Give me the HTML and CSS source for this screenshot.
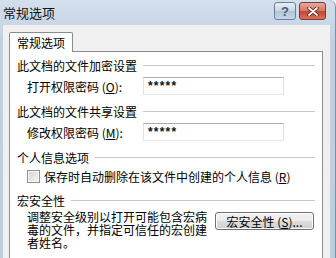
FILE: index.html
```html
<!DOCTYPE html>
<html lang="zh-CN">
<head>
  <meta charset="UTF-8">
  <title>常规选项</title>
  <link rel="stylesheet" href="styles.css">
</head>
<body>
  <div class="window">
    <div class="titlebar">
      <span class="title">常规选项</span>
      <div class="caption-buttons">
        <div class="cap-btn help">?</div>
        <div class="cap-btn close">
          <svg width="12" height="9" viewBox="0 0 12 9">
            <path d="M2 1 L10 8 M10 1 L2 8" stroke="#5a1a14" stroke-width="3.4" stroke-linecap="round"/>
            <path d="M2 1 L10 8 M10 1 L2 8" stroke="#fff" stroke-width="1.8" stroke-linecap="round"/>
          </svg>
        </div>
      </div>
    </div>

    <div class="client">
      <div class="tab">常规选项</div>
      <div class="panel">
        <div class="group-head">
          <span>此文档的文件加密设置</span>
          <div class="line"></div>
        </div>
        <div class="row">
          <span class="label">打开权限密码 (<u>O</u>):</span>
          <div class="field">*****</div>
        </div>

        <div class="group-head">
          <span>此文档的文件共享设置</span>
          <div class="line"></div>
        </div>
        <div class="row">
          <span class="label">修改权限密码 (<u>M</u>):</span>
          <div class="field">*****</div>
        </div>

        <div class="group-head">
          <span>个人信息选项</span>
          <div class="line"></div>
        </div>
        <div class="check-row">
          <div class="checkbox"></div>
          <span>保存时自动删除在该文件中创建的个人信息 (<u>R</u>)</span>
        </div>

        <div class="group-head">
          <span>宏安全性</span>
          <div class="line"></div>
        </div>
        <div class="macro-row">
          <p class="macro-text">调整安全级别以打开可能包含宏病毒的文件，并指定可信任的宏创建者姓名。</p>
          <button class="btn">宏安全性 (<u>S</u>)...</button>
        </div>
      </div>
    </div>
  </div>
</body>
</html>
```

FILE: styles.css
```css
body {
  margin: 0;
  width: 336px;
  height: 258px;
  overflow: hidden;
  background: #eef2f7;
  font-family: "Noto Sans CJK SC", "Liberation Sans", sans-serif;
  font-size: 12px;
  color: #000;
}

.window {
  display: flex;
  flex-direction: column;
  height: 258px;
  padding: 0 5px 0 3px;
  box-sizing: border-box;
  background: linear-gradient(#d3dfec, #c2d1e2 40px, #bccde0);
  border-top-right-radius: 7px;
  border-right: 1px solid #7d8fa5;
}

.titlebar {
  height: 25px;
  display: flex;
  align-items: center;
  justify-content: space-between;
}

.title {
  font-size: 13px;
  color: #111;
}

.caption-buttons {
  display: flex;
  gap: 3px;
  margin-right: 4px;
  margin-top: -3px;
}

.cap-btn {
  height: 16px;
  border: 1px solid #6d7f96;
  border-radius: 3px;
  display: flex;
  align-items: center;
  justify-content: center;
}

.help {
  width: 20px;
  background: linear-gradient(#e7eef6, #c9d6e4 50%, #b3c4d8 51%, #c6d6e8);
  color: #4a5a6e;
  font-family: "Liberation Sans", sans-serif;
  font-size: 13px;
  font-weight: bold;
}

.close {
  width: 25px;
  border-color: #7b3b33;
  background: linear-gradient(#e7a89b, #d57562 50%, #c2452f 51%, #d7735a);
}

.client {
  flex: 1;
  display: flex;
  flex-direction: column;
  align-items: flex-start;
  background: #f0f0f0;
  padding: 7px 7px 0 6px;
}

.tab {
  position: relative;
  z-index: 1;
  height: 19px;
  line-height: 20px;
  padding: 0 7px;
  white-space: nowrap;
  margin-bottom: -1px;
  background: #fff;
  border: 1px solid #898c95;
  border-bottom: none;
  border-radius: 2px 2px 0 0;
}

.panel {
  flex: 1;
  align-self: stretch;
  background: #fff;
  border: 1px solid #898c95;
  border-bottom: none;
  padding: 5px 7px 0 7px;
}

.group-head {
  display: flex;
  align-items: center;
  gap: 6px;
  height: 16px;
  margin-top: 8px;
  white-space: nowrap;
}

.group-head:first-child {
  margin-top: 0;
}

.line {
  flex: 1;
  height: 1px;
  background: #c4c8cc;
}

.row {
  display: flex;
  align-items: center;
  padding-left: 10px;
  margin-top: 4px;
}

.label {
  width: 116px;
  white-space: nowrap;
}

.field {
  width: 135px;
  height: 16px;
  line-height: 17px;
  padding-left: 4px;
  border: 1px solid;
  border-color: #abadb3 #dbdfe6 #e3e9ef #e2e3ea;
  font-family: "Liberation Sans", sans-serif;
  font-weight: bold;
  font-size: 12px;
  letter-spacing: 1.2px;
  color: #111;
}

.check-row {
  display: flex;
  align-items: center;
  gap: 4px;
  height: 16px;
  margin-top: 3px;
  padding-left: 10px;
  white-space: nowrap;
}

.checkbox {
  width: 11px;
  height: 11px;
  border: 1px solid #8f8f8f;
  background: linear-gradient(135deg, #d4d4d4, #f4f4f4);
  box-shadow: inset 0 0 0 1px #f7f7f7;
}

.macro-row {
  display: flex;
  align-items: flex-start;
  padding-left: 10px;
  margin-top: 2px;
}

.macro-text {
  width: 181px;
  margin: 0;
  line-height: 13px;
}

.btn {
  margin: 2px 1px 0 auto;
  width: 99px;
  height: 18px;
  padding: 0;
  font-family: "Noto Sans CJK SC", "Liberation Sans", sans-serif;
  font-size: 12px;
  color: #000;
  white-space: nowrap;
  border: 1px solid #707070;
  border-radius: 3px;
  background: linear-gradient(#f2f2f2, #ebebeb 50%, #dddddd 51%, #cfcfcf);
  box-shadow: inset 0 0 0 1px #fcfcfc;
}
```
